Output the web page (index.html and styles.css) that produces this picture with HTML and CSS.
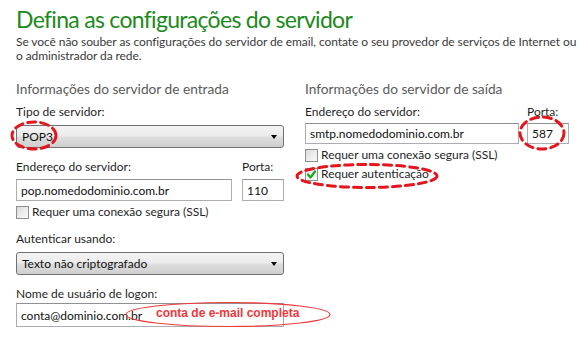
FILE: index.html
```html
<!DOCTYPE html>
<html lang="pt-BR">
<head>
<meta charset="utf-8">
<title>Defina as configurações do servidor</title>
<link rel="stylesheet" href="styles.css">
</head>
<body>
<div class="page">
  <h1 class="title">Defina as configurações do servidor</h1>
  <p class="intro">Se você não souber as configurações do servidor de email, contate o seu provedor de serviços de Internet ou<br>o administrador da rede.</p>

  <div class="columns">
    <section class="col col-in">
      <h2 class="section-title">Informações do servidor de entrada</h2>

      <div class="label">Tipo de servidor:</div>
      <div class="select"><span class="select-text">POP3</span><span class="arrow"></span></div>

      <div class="field-row row-in">
        <div class="field grow">
          <div class="label">Endereço do servidor:</div>
          <div class="input">pop.nomedodominio.com.br</div>
        </div>
        <div class="field port">
          <div class="label">Porta:</div>
          <div class="input">110</div>
        </div>
      </div>
      <div class="check check-in"><span class="box"></span><span>Requer uma conexão segura (SSL)</span></div>

      <div class="label label-auth">Autenticar usando:</div>
      <div class="select"><span class="select-text">Texto não criptografado</span><span class="arrow"></span></div>

      <div class="label label-user">Nome de usuário de logon:</div>
      <div class="input input-user">conta@dominio.com.br</div>
    </section>

    <section class="col col-out">
      <h2 class="section-title">Informações do servidor de saída</h2>
      <div class="field-row">
        <div class="field grow">
          <div class="label">Endereço do servidor:</div>
          <div class="input">smtp.nomedodominio.com.br</div>
        </div>
        <div class="field port">
          <div class="label">Porta:</div>
          <div class="input">587</div>
        </div>
      </div>
      <div class="check check-ssl"><span class="box"></span><span>Requer uma conexão segura (SSL)</span></div>
      <div class="check check-auth"><span class="box checked"><svg viewBox="0 0 11 11" width="11" height="11"><path d="M2 5.5 L4.5 8.5 L9 2.5" fill="none" stroke="#1aa51a" stroke-width="2.2" stroke-linejoin="round" stroke-linecap="round"/></svg></span><span>Requer autenticação</span></div>
    </section>
  </div>

  <svg class="marks" width="584" height="341" viewBox="0 0 584 341">
    <g fill="none" stroke="#e3151d" stroke-width="3" stroke-dasharray="8 5" stroke-linecap="round">
      <ellipse cx="34" cy="135.5" rx="22" ry="13.5"/>
      <ellipse cx="542" cy="133" rx="22" ry="16"/>
      <ellipse cx="367" cy="176" rx="70" ry="11.5"/>
    </g>
    <ellipse cx="228" cy="314.5" rx="102" ry="12" fill="none" stroke="#ee3a3a" stroke-width="1.2"/>
  </svg>
  <div class="note">conta de e-mail completa</div>
</div>
</body>
</html>
```

FILE: styles.css
```css
* { box-sizing: border-box; }

html, body {
  margin: 0;
  padding: 0;
  background: #ffffff;
}

.page {
  position: relative;
  width: 584px;
  height: 341px;
  overflow: hidden;
  font-family: "Lato", "Open Sans", sans-serif;
  color: #1f1f1f;
  padding: 0 0 0 16px;
}

.title {
  margin: 0;
  padding-top: 3px;
  font-family: "Lato", sans-serif;
  font-weight: 400;
  font-size: 23px;
  line-height: 32px;
  color: #1c8a1c;
  letter-spacing: -0.7px;
  white-space: nowrap;
}

.intro {
  margin: 0;
  font-size: 12px;
  line-height: 14px;
  color: #3a3a3a;
  letter-spacing: -0.08px;
  white-space: nowrap;
}

.columns {
  display: grid;
  grid-template-columns: 268px 264px;
  column-gap: 21px;
  margin-top: 16px;
}

.section-title {
  margin: 0 0 5px;
  font-weight: 400;
  font-size: 13.7px;
  line-height: 20px;
  color: #5a5a5a;
  white-space: nowrap;
}

.label {
  font-size: 12px;
  line-height: 16px;
  margin-bottom: 5px;
  color: #1f1f1f;
  white-space: nowrap;
}

.col-out .label { margin-bottom: 3px; }

.select {
  display: flex;
  align-items: center;
  justify-content: space-between;
  height: 23px;
  padding: 0 5px 0 5px;
  border: 1px solid #707070;
  border-radius: 3px;
  background: linear-gradient(#f3f3f3 0%, #ececec 45%, #dddddd 55%, #cfcfcf 100%);
  font-size: 12px;
  color: #111;
}

.arrow {
  width: 0;
  height: 0;
  border-left: 3.5px solid transparent;
  border-right: 3.5px solid transparent;
  border-top: 4px solid #000;
  margin-right: 1px;
}

.field-row {
  display: flex;
  gap: 10px;
}

.row-in {
  margin-top: 11px;
}

.row-in .label { margin-bottom: 4px; }

.field.grow { flex: 1; }
.field.port { width: 42px; }

.input {
  height: 22px;
  display: flex;
  align-items: center;
  padding: 0 4px;
  border: 1px solid #abadb3;
  border-top-color: #8f9295;
  background: #fff;
  font-size: 12px;
  color: #111;
  white-space: nowrap;
}

.col-out .field-row { gap: 8px; }
.col-out .input { height: 21px; }

.check {
  display: flex;
  align-items: center;
  gap: 3px;
  font-size: 12px;
  line-height: 16px;
  color: #1f1f1f;
  white-space: nowrap;
}

.box {
  width: 13px;
  height: 13px;
  border: 1px solid #8e8f8f;
  background: linear-gradient(135deg, #dcdcdc, #fafafa);
  display: flex;
  align-items: center;
  justify-content: center;
  flex: none;
}

.box.checked { background: linear-gradient(135deg, #e4e4e4, #fcfcfc); }

.check-in { margin-top: 3px; }
.label-auth { margin-top: 11px; margin-bottom: 5px; }
.label-user { margin-top: 11px; margin-bottom: 1px; }
.input-user { height: 24px; }

.check-ssl { margin-top: 3px; }
.check-auth { margin-top: 3px; }

.marks {
  position: absolute;
  left: 0;
  top: 0;
  pointer-events: none;
}

.note {
  position: absolute;
  left: 156px;
  top: 306px;
  font-family: "Liberation Sans", Arial, sans-serif;
  font-weight: 700;
  font-size: 12px;
  line-height: 14px;
  color: #f0383c;
  white-space: nowrap;
}
```
